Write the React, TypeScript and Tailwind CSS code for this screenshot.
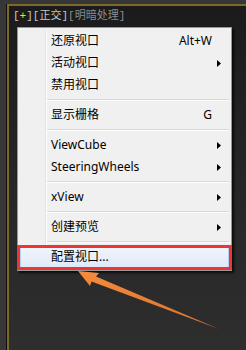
import React from "react";

type Item =
  | { kind: "item"; label: string; shortcut?: string; sub?: boolean; active?: boolean }
  | { kind: "sep" };

const items: Item[] = [
  { kind: "item", label: "还原视口", shortcut: "Alt+W" },
  { kind: "item", label: "活动视口", sub: true },
  { kind: "item", label: "禁用视口" },
  { kind: "sep" },
  { kind: "item", label: "显示栅格", shortcut: "G" },
  { kind: "sep" },
  { kind: "item", label: "ViewCube", sub: true },
  { kind: "item", label: "SteeringWheels", sub: true },
  { kind: "sep" },
  { kind: "item", label: "xView", sub: true },
  { kind: "sep" },
  { kind: "item", label: "创建预览", sub: true },
  { kind: "sep" },
  { kind: "item", label: "配置视口...", active: true },
];

function Gutter({ hidden }: { hidden?: boolean }) {
  return (
    <div className="flex h-full shrink-0">
      <div className="w-[25px]" />
      <div className={`w-[1px] ${hidden ? "" : "bg-[#e2e3e3]"}`} />
      <div className={`w-[1px] ${hidden ? "" : "bg-white"}`} />
    </div>
  );
}

function SubArrow() {
  return (
    <svg width="4" height="7" viewBox="0 0 4 7" className="ml-[5px]">
      <polygon points="0,0 4,3.5 0,7" fill="#000" />
    </svg>
  );
}

export default function App() {
  return (
    <div className="relative h-[350px] w-[246px] overflow-hidden bg-[#373737] pl-[6px] pt-[4px]">
      {/* VIEWPORT */}
      <div className="h-full border-l border-[#0e0e0e]">
        <div className="h-full border-l-2 border-t-2 border-[#7b682a] bg-gradient-to-b from-[#1b1b1b] via-[#262626] to-[#2e2e2e]">
          {/* LABEL */}
          <div
            className="pl-[4px] pt-[3px] text-[11px] leading-[14px] text-[#c8c8c8]"
            style={{ fontFamily: '"Liberation Mono", "Noto Sans CJK SC", monospace' }}
          >
            [<span className="text-[#f5e400]">+</span>][正交]
            <span className="text-[#8c8c8c]">[明暗处理]</span>
          </div>

          {/* MENU */}
          <div
            className="ml-[8px] mt-[4px] w-[215px] border border-[#979797] bg-[#f0f0f0] p-[2px] text-[12px] text-black shadow-[2px_2px_2px_rgba(0,0,0,0.7)]"
            style={{ fontFamily: '"Noto Sans", "Noto Sans CJK SC", sans-serif' }}
          >
            {items.map((item, i) =>
              item.kind === "sep" ? (
                <div key={i} className="flex h-[8px] items-stretch">
                  <Gutter />
                  <div className="flex flex-1 flex-col justify-center">
                    <div className="h-[1px] bg-[#d7d7d7]" />
                    <div className="h-[1px] bg-white" />
                  </div>
                </div>
              ) : (
                <div
                  key={i}
                  className={`flex h-[22px] items-center ${
                    item.active
                      ? "rounded-[2px] border border-[#b4d0f2] bg-gradient-to-b from-[#f1f5fb] to-[#e0eaf7]"
                      : ""
                  }`}
                >
                  <Gutter hidden={item.active} />
                  <span className={`flex-1 leading-[22px] ${item.active ? "pl-[3px]" : "pl-[4px]"}`}>
                    {item.label}
                  </span>
                  {item.shortcut && <span className="leading-[22px]">{item.shortcut}</span>}
                  <div className="flex w-[17px] items-center">{item.sub && <SubArrow />}</div>
                </div>
              )
            )}
          </div>
        </div>
      </div>

      {/* RED HIGHLIGHT BOX */}
      <div className="absolute left-[17px] top-[245px] h-[25px] w-[215px] border-[3px] border-[#ec3636]" />

      {/* ARROW */}
      <svg className="absolute left-0 top-0" width="246" height="350" viewBox="0 0 246 350">
        <defs>
          <linearGradient id="ar" x1="0" y1="0" x2="1" y2="1">
            <stop offset="0" stopColor="#f68b3c" />
            <stop offset="1" stopColor="#d9722e" />
          </linearGradient>
        </defs>
        <polygon
          points="78,271 99,273 96,276.5 219,329 91.5,281.5 90,286"
          fill="url(#ar)"
        />
      </svg>
    </div>
  );
}
